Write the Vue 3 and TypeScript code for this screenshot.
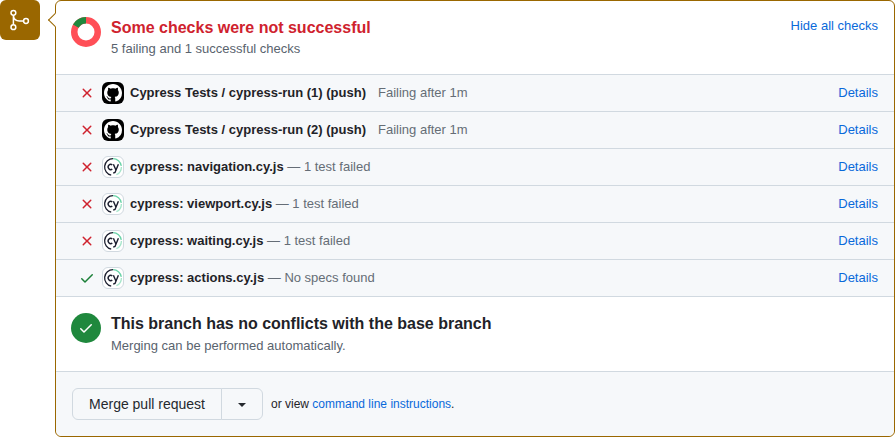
<template>
  <div class="timeline">
    <div class="badge">
      <svg width="24" height="24" viewBox="0 0 24 24" fill="none" stroke="#fff" stroke-width="1.5">
        <circle cx="5.4" cy="4.8" r="2.4" />
        <circle cx="5.4" cy="19.2" r="2.4" />
        <circle cx="18" cy="13" r="2.4" />
        <path d="M5.4 7.2v9.6M5.4 7.5c.3 3.3 2.6 5.5 6 5.5h4.2" />
      </svg>
    </div>
    <div class="card">
      <span class="caret"></span>
      <div class="summary">
        <svg class="donut" width="30" height="30" viewBox="0 0 30 30">
          <circle cx="15" cy="15" r="11.75" fill="none" stroke="#ff4f57" stroke-width="6.5" />
          <path d="M15 3.25A11.75 11.75 0 0 0 4.82 9.12" fill="none" stroke="#1f883d" stroke-width="6.5" />
        </svg>
        <div class="summary-text">
          <div class="title-fail">Some checks were not successful</div>
          <div class="sub sub-tight">5 failing and 1 successful checks</div>
        </div>
        <a class="link hide">Hide all checks</a>
      </div>

      <div class="checks">
        <div v-for="check in checks" :key="check.name" class="check">
          <svg v-if="check.ok" class="state" width="16" height="16" viewBox="0 0 16 16" fill="#1a7f37">
            <path d="M13.78 4.22a.75.75 0 0 1 0 1.06l-7.25 7.25a.75.75 0 0 1-1.06 0L2.22 9.28a.75.75 0 0 1 1.06-1.06L6 10.94l6.72-6.72a.75.75 0 0 1 1.06 0Z" />
          </svg>
          <svg v-else class="state" width="16" height="16" viewBox="0 0 16 16" fill="#cf222e">
            <path d="M3.72 3.72a.75.75 0 0 1 1.06 0L8 6.94l3.22-3.22a.75.75 0 1 1 1.06 1.06L9.06 8l3.22 3.22a.75.75 0 1 1-1.06 1.06L8 9.06l-3.22 3.22a.75.75 0 0 1-1.06-1.06L6.94 8 3.72 4.78a.75.75 0 0 1 0-1.06Z" />
          </svg>

          <span v-if="check.kind === 'github'" class="app-icon github">
            <svg width="18" height="18" viewBox="0 0 16 16" fill="#fff">
              <path d="M8 0C3.58 0 0 3.58 0 8c0 3.54 2.29 6.53 5.47 7.59.4.07.55-.17.55-.38 0-.19-.01-.82-.01-1.49-2.01.37-2.53-.49-2.69-.94-.09-.23-.48-.94-.82-1.13-.28-.15-.68-.52-.01-.53.63-.01 1.08.58 1.23.82.72 1.21 1.87.87 2.33.66.07-.52.28-.87.51-1.07-1.78-.2-3.64-.89-3.64-3.95 0-.87.31-1.59.82-2.15-.08-.2-.36-1.02.08-2.12 0 0 .67-.21 2.2.82.64-.18 1.32-.27 2-.27s1.36.09 2 .27c1.53-1.04 2.2-.82 2.2-.82.44 1.1.16 1.92.08 2.12.51.56.82 1.27.82 2.15 0 3.07-1.87 3.75-3.65 3.95.29.25.54.73.54 1.48 0 1.07-.01 1.93-.01 2.2 0 .21.15.46.55.38A8.01 8.01 0 0 0 16 8c0-4.42-3.58-8-8-8Z" />
            </svg>
          </span>
          <span v-else class="app-icon cy">
            <svg width="20" height="20" viewBox="0 0 20 20" fill="none">
              <path d="M10 1.6a8.4 8.4 0 0 1 8.3 7.2" stroke="#69d3a7" stroke-width="1.3" />
              <path d="M18.4 10a8.4 8.4 0 0 1-5 7.7" stroke="#69d3a7" stroke-width="1.3" opacity=".6" />
              <path d="M8.2 18.2A8.4 8.4 0 0 1 10 1.6" stroke="#1b1e2e" stroke-width="1.3" />
              <path d="M9.3 7.9a2.6 2.6 0 1 0 0 4.2" stroke="#1b1e2e" stroke-width="1.4" />
              <path d="M10.4 7.2l2.4 5.6M15.4 7.2l-3.4 8.2-1.8.7" stroke="#1b1e2e" stroke-width="1.4" />
            </svg>
          </span>

          <div class="check-text">
            <strong>{{ check.name }}</strong>
            <span class="check-note" :class="{ spaced: check.kind === 'github' }">{{ check.note }}</span>
          </div>
          <a class="link details">Details</a>
        </div>
      </div>

      <div class="conflicts">
        <span class="ok-circle">
          <svg width="16" height="16" viewBox="0 0 16 16" fill="#fff">
            <path d="M13.78 4.22a.75.75 0 0 1 0 1.06l-7.25 7.25a.75.75 0 0 1-1.06 0L2.22 9.28a.75.75 0 0 1 1.06-1.06L6 10.94l6.72-6.72a.75.75 0 0 1 1.06 0Z" />
          </svg>
        </span>
        <div class="summary-text">
          <div class="title">This branch has no conflicts with the base branch</div>
          <div class="sub">Merging can be performed automatically.</div>
        </div>
      </div>

      <div class="footer">
        <div class="merge-group">
          <button class="merge-btn">Merge pull request</button>
          <button class="merge-caret"><span class="tri"></span></button>
        </div>
        <span class="hint">or view <a class="link">command line instructions</a>.</span>
      </div>
    </div>
  </div>
</template>

<script setup lang="ts">
interface Check {
  name: string
  note: string
  kind: 'github' | 'cypress'
  ok: boolean
}

const checks: Check[] = [
  { name: 'Cypress Tests / cypress-run (1) (push)', note: 'Failing after 1m', kind: 'github', ok: false },
  { name: 'Cypress Tests / cypress-run (2) (push)', note: 'Failing after 1m', kind: 'github', ok: false },
  { name: 'cypress: navigation.cy.js', note: '— 1 test failed', kind: 'cypress', ok: false },
  { name: 'cypress: viewport.cy.js', note: '— 1 test failed', kind: 'cypress', ok: false },
  { name: 'cypress: waiting.cy.js', note: '— 1 test failed', kind: 'cypress', ok: false },
  { name: 'cypress: actions.cy.js', note: '— No specs found', kind: 'cypress', ok: true }
]
</script>

<style>
html,
body {
  background: #fff;
  overflow: hidden;
}
</style>

<style scoped>
.timeline {
  display: flex;
  width: 895px;
  height: 437px;
  gap: 15px;
  font-family: "Liberation Sans", Arial, sans-serif;
  font-size: 13px;
  color: #1f2328;
  box-sizing: border-box;
}

.badge {
  flex: none;
  width: 40px;
  height: 40px;
  border-radius: 6px;
  background: #9a6700;
  display: flex;
  align-items: center;
  justify-content: center;
}

.card {
  position: relative;
  flex: 1;
  height: 437px;
  box-sizing: border-box;
  border: 1px solid #9a6700;
  border-radius: 6px;
  display: flex;
  flex-direction: column;
  background: #fff;
}

.caret {
  position: absolute;
  left: -6px;
  top: 14px;
  width: 9px;
  height: 9px;
  background: #fff;
  border-left: 1px solid #9a6700;
  border-bottom: 1px solid #9a6700;
  transform: rotate(45deg);
}

.summary {
  height: 73px;
  flex: none;
  display: flex;
  align-items: flex-start;
  padding: 15px 16px 0 15px;
  box-sizing: border-box;
  gap: 10px;
}

.donut {
  margin-top: 1px;
}

.summary-text {
  flex: 1;
  min-width: 0;
}

.title-fail,
.title {
  font-size: 16px;
  font-weight: 700;
  line-height: 24px;
}

.title-fail {
  color: #cf222e;
}

.sub {
  color: #59636e;
  line-height: 20px;
}

.sub-tight {
  margin-top: -1px;
}

.link {
  color: #0969da;
}

.hide {
  line-height: 20px;
}

.check {
  height: 37px;
  box-sizing: border-box;
  border-top: 1px solid #d1d9e0;
  background: #f6f8fa;
  display: flex;
  align-items: center;
  padding: 0 16px 0 23px;
}

.state {
  flex: none;
  margin-right: 7px;
}

.app-icon {
  flex: none;
  width: 22px;
  height: 22px;
  box-sizing: border-box;
  border-radius: 6px;
  display: flex;
  align-items: center;
  justify-content: center;
  margin-right: 6px;
}

.github {
  background: #000;
}

.cy {
  background: #fff;
  border: 1px solid #d1d9e0;
}

.check-text {
  flex: 1;
  min-width: 0;
  white-space: nowrap;
  color: #656d76;
  line-height: 20px;
}

.details {
  line-height: 20px;
}

.check-text strong {
  color: #1f2328;
}

.check-note {
  margin-left: 3.6px;
}

.check-note.spaced {
  margin-left: 12px;
}

.conflicts {
  height: 75px;
  flex: none;
  box-sizing: border-box;
  border-top: 1px solid #d1d9e0;
  display: flex;
  align-items: flex-start;
  padding: 15px 16px 0 15px;
  gap: 10px;
}

.ok-circle {
  flex: none;
  width: 30px;
  height: 30px;
  margin-top: 1px;
  border-radius: 50%;
  background: #1f883d;
  display: flex;
  align-items: center;
  justify-content: center;
}

.footer {
  flex: 1;
  border-top: 1px solid #d1d9e0;
  background: #f6f8fa;
  border-radius: 0 0 6px 6px;
  display: flex;
  align-items: center;
  padding: 0 16px;
  gap: 8px;
}

.merge-group {
  display: flex;
  height: 32px;
}

.merge-group button {
  font: inherit;
  font-size: 14px;
  color: #25292e;
  background: #f6f8fa;
  border: 1px solid #d1d9e0;
  height: 32px;
  padding: 0;
  box-sizing: border-box;
}

.merge-btn {
  width: 150px;
  border-radius: 6px 0 0 6px;
}

.merge-caret {
  width: 42px;
  margin-left: -1px;
  border-radius: 0 6px 6px 0;
  display: flex;
  align-items: center;
  justify-content: center;
}

.tri {
  width: 0;
  height: 0;
  margin-top: 2px;
  border-left: 4px solid transparent;
  border-right: 4px solid transparent;
  border-top: 4px solid #25292e;
}

.hint {
  font-size: 12px;
}
</style>
